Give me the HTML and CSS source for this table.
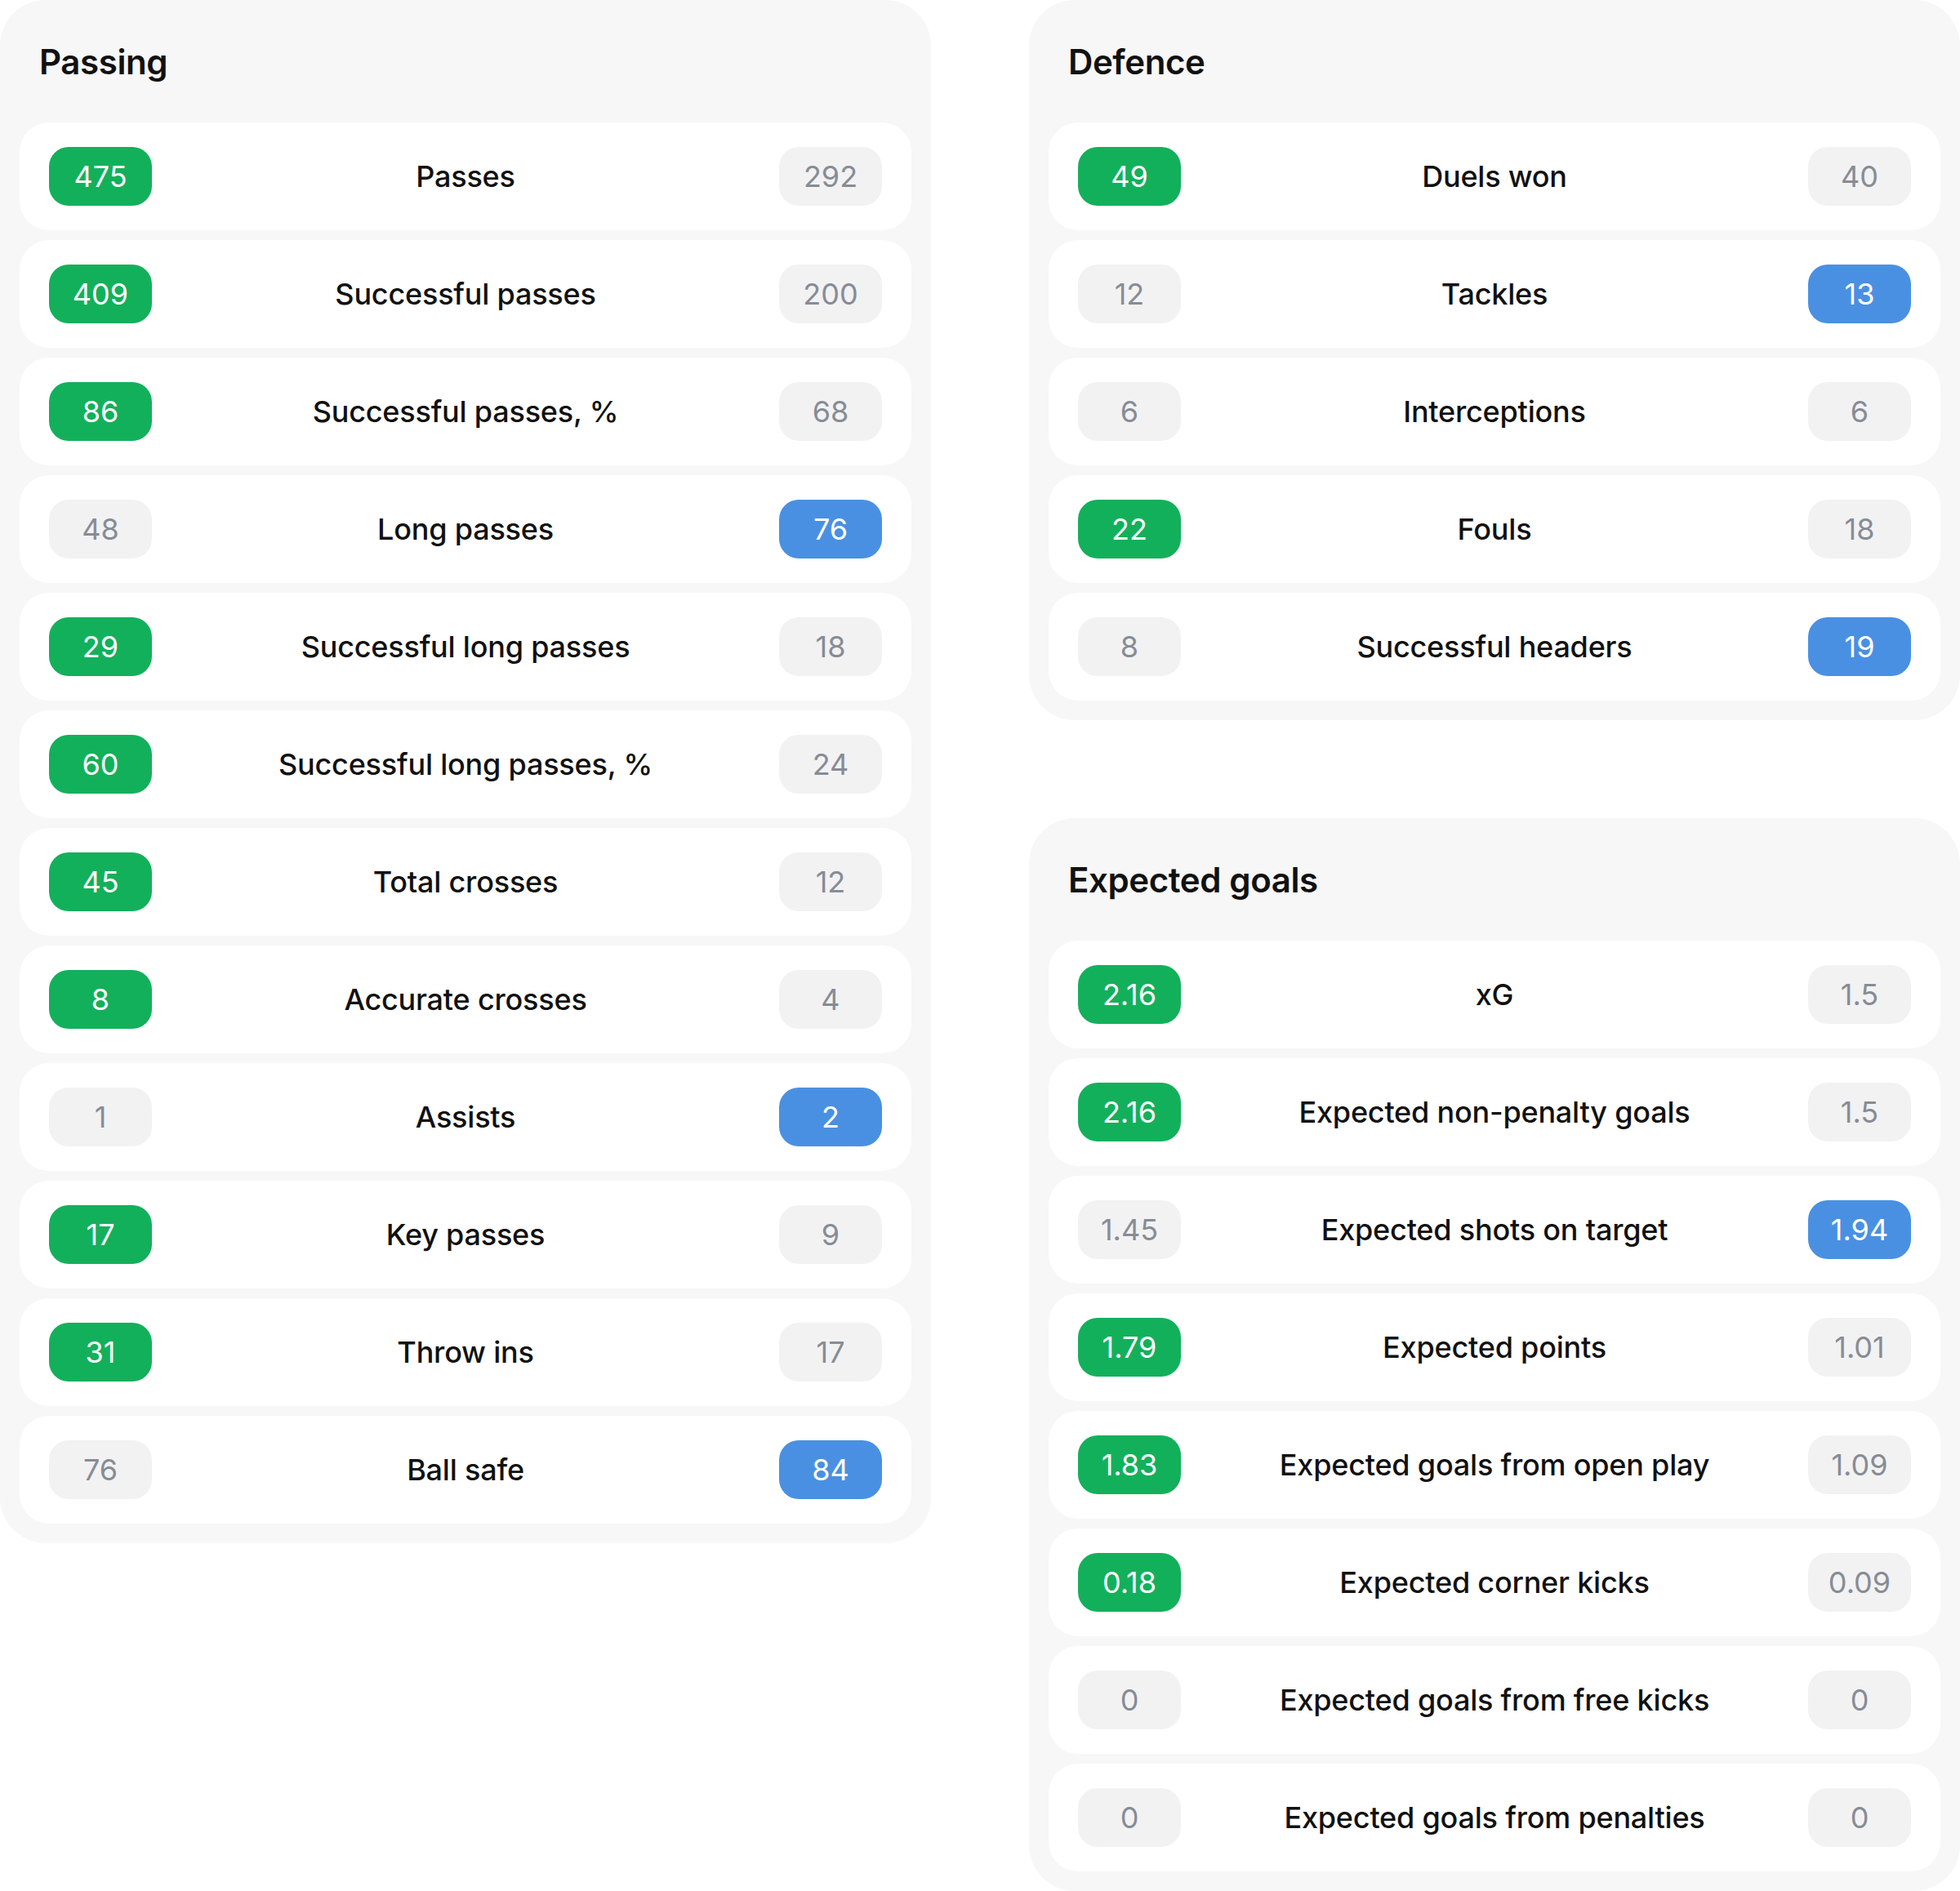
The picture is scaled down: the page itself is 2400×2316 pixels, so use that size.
FILE: index.html
```html
<!DOCTYPE html>
<html lang="en">
<head>
  <meta charset="UTF-8" />
  <title>Match stats</title>
  <link rel="stylesheet" href="styles.css">
</head>
<body>

  <div class="page">
    <section class="card">
      <h2 class="card-title">Passing</h2>
      <div class="row"><span class="val win">475</span><span class="label">Passes</span><span class="val">292</span></div>
      <div class="row"><span class="val win">409</span><span class="label">Successful passes</span><span class="val">200</span></div>
      <div class="row"><span class="val win">86</span><span class="label">Successful passes, %</span><span class="val">68</span></div>
      <div class="row"><span class="val">48</span><span class="label">Long passes</span><span class="val away">76</span></div>
      <div class="row"><span class="val win">29</span><span class="label">Successful long passes</span><span class="val">18</span></div>
      <div class="row"><span class="val win">60</span><span class="label">Successful long passes, %</span><span class="val">24</span></div>
      <div class="row"><span class="val win">45</span><span class="label">Total crosses</span><span class="val">12</span></div>
      <div class="row"><span class="val win">8</span><span class="label">Accurate crosses</span><span class="val">4</span></div>
      <div class="row"><span class="val">1</span><span class="label">Assists</span><span class="val away">2</span></div>
      <div class="row"><span class="val win">17</span><span class="label">Key passes</span><span class="val">9</span></div>
      <div class="row"><span class="val win">31</span><span class="label">Throw ins</span><span class="val">17</span></div>
      <div class="row"><span class="val">76</span><span class="label">Ball safe</span><span class="val away">84</span></div>
    </section>

    <div class="col">
      <section class="card">
        <h2 class="card-title">Defence</h2>
        <div class="row"><span class="val win">49</span><span class="label">Duels won</span><span class="val">40</span></div>
        <div class="row"><span class="val">12</span><span class="label">Tackles</span><span class="val away">13</span></div>
        <div class="row"><span class="val">6</span><span class="label">Interceptions</span><span class="val">6</span></div>
        <div class="row"><span class="val win">22</span><span class="label">Fouls</span><span class="val">18</span></div>
        <div class="row"><span class="val">8</span><span class="label">Successful headers</span><span class="val away">19</span></div>
      </section>

      <section class="card">
        <h2 class="card-title">Expected goals</h2>
        <div class="row"><span class="val win">2.16</span><span class="label">xG</span><span class="val">1.5</span></div>
        <div class="row"><span class="val win">2.16</span><span class="label">Expected non-penalty goals</span><span class="val">1.5</span></div>
        <div class="row"><span class="val">1.45</span><span class="label">Expected shots on target</span><span class="val away">1.94</span></div>
        <div class="row"><span class="val win">1.79</span><span class="label">Expected points</span><span class="val">1.01</span></div>
        <div class="row"><span class="val win">1.83</span><span class="label">Expected goals from open play</span><span class="val">1.09</span></div>
        <div class="row"><span class="val win">0.18</span><span class="label">Expected corner kicks</span><span class="val">0.09</span></div>
        <div class="row"><span class="val">0</span><span class="label">Expected goals from free kicks</span><span class="val">0</span></div>
        <div class="row"><span class="val">0</span><span class="label">Expected goals from penalties</span><span class="val">0</span></div>
      </section>
    </div>
  </div>

</body>
</html>
```

FILE: styles.css
```css
body {
  margin: 0;
  font-family: Inter, "Noto Sans", sans-serif;
  background-color: white;
  color: #111;
}

.page {
  display: grid;
  grid-template-columns: 1140px 1140px;
  column-gap: 120px;
  align-items: start;
}

.col {
  display: flex;
  flex-direction: column;
  gap: 120px;
}

.card {
  background: #f7f7f7;
  border-radius: 56px;
  padding: 0 24px 24px;
  display: flex;
  flex-direction: column;
  gap: 12px;
}

.card-title {
  margin: 0 0 -12px;
  height: 150px;
  display: flex;
  align-items: center;
  padding-left: 24px;
  font-size: 42px;
  font-weight: 600;
  letter-spacing: -0.4px;
  color: #111;
}

.row {
  background: white;
  border-radius: 36px;
  height: 132px;
  padding: 0 36px;
  display: grid;
  grid-template-columns: 126px 1fr 126px;
  align-items: center;
}

.label {
  text-align: center;
  font-size: 36px;
  font-weight: 500;
  letter-spacing: -0.2px;
}

.val {
  height: 72px;
  border-radius: 24px;
  background: #f2f2f3;
  color: #878c95;
  font-size: 36px;
  display: flex;
  align-items: center;
  justify-content: center;
}

.val.win {
  background: #13b05b;
  color: white;
}

.val.away {
  background: #4a90e2;
  color: white;
}
```
